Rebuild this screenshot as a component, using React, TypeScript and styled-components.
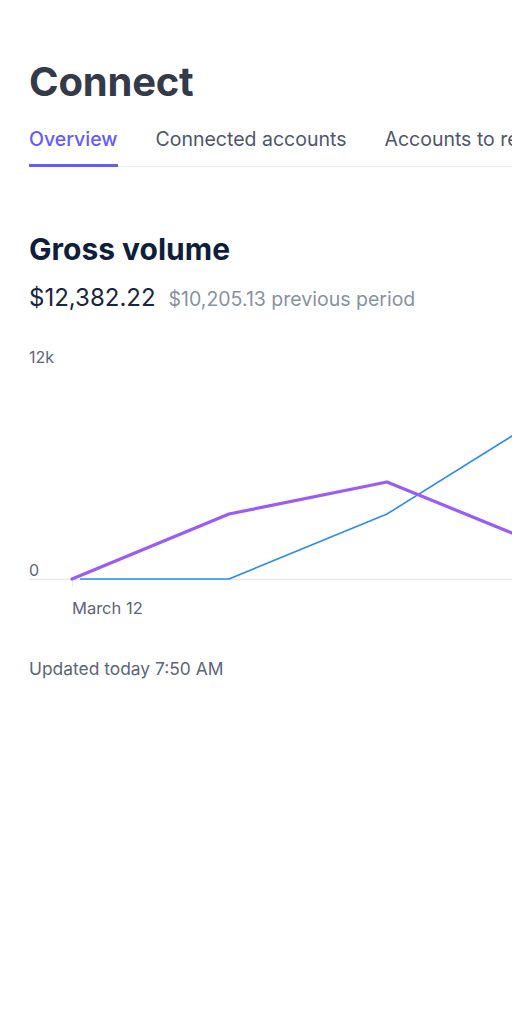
import React from 'react'
import styled, { createGlobalStyle } from 'styled-components'

const GlobalStyle = createGlobalStyle`
  html, body {
    margin: 0;
    padding: 0;
    background: #ffffff;
    overflow: hidden;
  }
  body {
    font-family: Inter, "Noto Sans", sans-serif;
  }
`;

const tabs = ['Overview', 'Connected accounts', 'Accounts to review']

const App = () => {
  return (
    <Page>
      <GlobalStyle />
      <Title>Connect</Title>

      <TabBar>
        {tabs.map((t, i) => (
          <Tab key={t} active={i === 0}>{t}</Tab>
        ))}
      </TabBar>

      <Section>
        <SectionTitle>Gross volume</SectionTitle>
        <Figures>
          <Amount>$12,382.22</Amount>
          <Previous>$10,205.13 previous period</Previous>
        </Figures>

        <Chart width="760" height="290" viewBox="0 0 760 290">
          <AxisLabel x="0" y="24">12k</AxisLabel>
          <AxisLabel x="0" y="237">0</AxisLabel>
          <line x1="0" y1="240.5" x2="760" y2="240.5" stroke="#e6e9ef" strokeWidth="1.5" />
          <line x1="43.5" y1="241" x2="43.5" y2="248" stroke="#e6e9ef" strokeWidth="1" />
          <polyline
            points="51,240 200,240 358,175 483,97 640,0"
            fill="none"
            stroke="#2b8cf0"
            strokeWidth="1.6"
            strokeLinejoin="round"
          />
          <polyline
            points="43,240 200,175 358,143 483,194 640,260"
            fill="none"
            stroke="#9b5cf6"
            strokeWidth="3.2"
            strokeLinejoin="round"
            strokeLinecap="round"
          />
          <AxisLabel x="43" y="275" small>March 12</AxisLabel>
        </Chart>

        <Updated>Updated today 7:50 AM</Updated>
      </Section>
    </Page>
  );
}

export default App

const Page = styled.div`
  width: 100%;
  height: 100vh;
  padding: 58px 0 0 29px;
  box-sizing: border-box;
  overflow: hidden;
`;

const Title = styled.h1`
  margin: 0;
  font-size: 40px;
  font-weight: 700;
  line-height: 48px;
  color: #353a4a;
  letter-spacing: -0.2px;
`;

const TabBar = styled.div`
  display: flex;
  gap: 38px;
  margin-top: 21px;
  border-bottom: 1.5px solid #ebeef2;
  white-space: nowrap;
  width: 900px;
`;

const Tab = styled.div<{ active?: boolean }>`
  font-size: 19.5px;
  font-weight: ${p => (p.active ? 500 : 400)};
  color: ${p => (p.active ? '#635bff' : '#4f566b')};
  padding-bottom: 13px;
  line-height: 24px;
  border-bottom: 3px solid ${p => (p.active ? '#635bff' : 'transparent')};
  margin-bottom: -1.5px;
`;

const Section = styled.div`
  margin-top: 65px;
`;

const SectionTitle = styled.h2`
  margin: 0;
  font-size: 30px;
  font-weight: 700;
  line-height: 34px;
  color: #0f1f3a;
`;

const Figures = styled.div`
  display: flex;
  align-items: baseline;
  gap: 13px;
  margin-top: 17px;
  white-space: nowrap;
`;

const Amount = styled.span`
  font-size: 24px;
  color: #1a2540;
`;

const Previous = styled.span`
  font-size: 19.5px;
  color: #8792a2;
`;

const Chart = styled.svg`
  display: block;
  margin-top: 27px;
  overflow: visible;
`;

const AxisLabel = styled.text<{ small?: boolean }>`
  font-family: Inter, "Noto Sans", sans-serif;
  font-size: ${p => (p.small ? '16.5px' : '16px')};
  fill: #5c6577;
`;

const Updated = styled.div`
  margin-top: 29px;
  font-size: 17.4px;
  color: #5c6577;
`;
